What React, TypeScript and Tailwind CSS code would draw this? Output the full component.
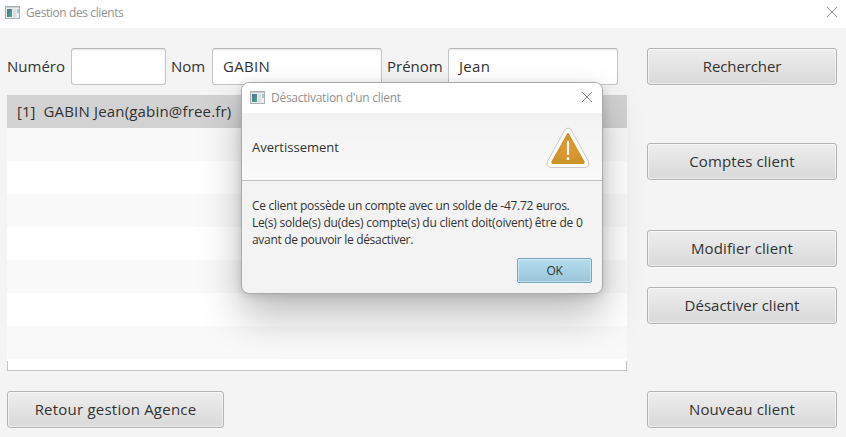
import React from "react";

function WindowIcon() {
  return (
    <svg width="15" height="13" viewBox="0 0 15 13" className="shrink-0">
      <defs>
        <linearGradient id="pane" x1="0" y1="0" x2="1" y2="1">
          <stop offset="0" stopColor="#496f9c" />
          <stop offset="1" stopColor="#55a980" />
        </linearGradient>
      </defs>
      <rect x="0.5" y="0.5" width="14" height="12" fill="#e9edf0" stroke="#a9afb5" />
      <rect x="1" y="1" width="13" height="1" fill="#cbd0d5" />
      <rect x="2" y="3" width="5" height="8" fill="url(#pane)" />
      <rect x="8" y="3" width="3" height="8" fill="#dedede" />
      <rect x="12" y="3" width="2" height="4" fill="#a5cbc5" />
      <rect x="12" y="7" width="2" height="4" fill="#eef2f2" />
    </svg>
  );
}

function CloseIcon() {
  return (
    <svg width="10" height="10" viewBox="0 0 10 10" className="shrink-0">
      <path d="M0 0L10 10M10 0L0 10" stroke="#8a8a8a" strokeWidth="1" fill="none" />
    </svg>
  );
}

function WarningIcon() {
  return (
    <svg width="44" height="42" viewBox="0 0 44 42" className="mt-[2px] shrink-0">
      <defs>
        <radialGradient id="amber">
          <stop offset="0" stopColor="#e39a35" />
          <stop offset="1" stopColor="#cc9329" />
        </radialGradient>
      </defs>
      <path d="M18.6 3.3Q22 -1.2 25.4 3.3L42.4 34.2Q44.3 39.8 39.2 40.5H4.8Q-.3 39.8 1.6 34.2Z" fill="#fff" stroke="#cacaca" />
      <path d="M20.8 7Q22 5 23.2 7L38.5 34.4Q39.2 37 37 37H7Q4.800 37 5.500 34.400Z" fill="url(#amber)" />
      <rect x="20.900" y="14" width="2.200" height="14" rx="0.700" fill="#fff" />
      <rect x="20.700" y="30.200" width="2.600" height="2.800" rx="0.800" fill="#fff" />
    </svg>
  );
}

function Button({ children, className }: { children: React.ReactNode; className: string }) {
  return (
    <button
      className={`flex h-[37px] shrink-0 items-center justify-center rounded-[3px] border border-[#b3b3b3] bg-linear-to-b from-[#eeeeee] to-[#d9d9d9] text-[15px] whitespace-nowrap shadow-[inset_0_0_0_1px_rgba(255,255,255,0.5),0_1px_0_#fafafa] ${className}`}
    >
      {children}
    </button>
  );
}

function Field({ value, className }: { value: string; className: string }) {
  return (
    <div
      className={`flex h-[37px] shrink-0 items-center rounded-[3px] border border-[#c4c4c4] border-t-[#b7b7b7] bg-white pl-[10px] text-[15px] shadow-[inset_0_2px_2px_-1px_#e4e4e4] ${className}`}
    >
      {value}
    </div>
  );
}

function ClientList() {
  return (
    <div className="mt-[10px] h-[276px] w-[620px] bg-white">
      <div className="flex h-[33px] items-center gap-[8px] bg-[#d2d2d2] pl-[10px] text-[15px]">
        <span>[1]</span>
        <span className="tracking-[0.18px]">GABIN Jean(gabin@free.fr)</span>
      </div>
      {[1, 2, 3, 4, 5, 6, 7].map((row) => (
        <div key={row} className={row % 2 ? "h-[33px] bg-[#f9f9f9]" : "h-[33px] bg-white"} />
      ))}
      <div className="h-[2px]" />
      <div className="h-[10px] border-x border-b border-[#c4c4c4]" />
    </div>
  );
}

function WarningDialog() {
  return (
    <div className="absolute top-[82px] left-[241px] flex h-[212px] w-[362px] flex-col rounded-[8px] border border-[#aaaaaa] bg-[#f3f3f3] text-[12px] shadow-[0_22px_40px_rgba(0,0,0,0.26),0_2px_10px_rgba(0,0,0,0.14)]">
      <div className="flex h-[30px] shrink-0 items-center justify-between rounded-t-[7px] bg-white pr-[10px] pl-[8px]">
        <div className="flex items-center gap-[6px] text-[#929292]">
          <span className="-mt-[2px]">
            <WindowIcon />
          </span>
          <span className="tracking-[-0.27px]">Désactivation d'un client</span>
        </div>
        <span className="-mt-[2px]">
          <CloseIcon />
        </span>
      </div>
      <div className="flex h-[68px] shrink-0 items-center justify-between border-b border-[#bebebe] bg-linear-to-b from-[#f2f2f2] to-[#fafafa] pr-[12px] pl-[10px]">
        <span className="pt-[2px] text-[13px]">Avertissement</span>
        <WarningIcon />
      </div>
      <div className="px-[10px] pt-[16px] leading-[17px] whitespace-nowrap">
        <div className="tracking-[-0.27px]">Ce client possède un compte avec un solde de -47.72 euros.</div>
        <div className="tracking-[-0.23px]">Le(s) solde(s) du(des) compte(s) du client doit(oivent) être de 0</div>
        <div className="tracking-[-0.31px]">avant de pouvoir le désactiver.</div>
      </div>
      <div className="mt-[10px] flex justify-end pr-[10px]">
        <button className="h-[25px] w-[75px] rounded-[2px] border border-[#7aa5b9] bg-linear-to-b from-[#b5ddf0] to-[#9bc4d8] tracking-[-0.3px] shadow-[inset_0_0_0_1px_rgba(211,239,250,0.65)]">
          OK
        </button>
      </div>
    </div>
  );
}

export default function App() {
  return (
    <div className="relative h-[437px] w-[846px] overflow-hidden bg-[#f4f4f4] font-['Open_Sans','Noto_Sans',sans-serif] text-[#333333]">
      <header className="flex h-[28px] items-center justify-between bg-white pr-[9px] pb-[3px] pl-[5px]">
        <div className="flex items-center gap-[6px] text-[12px] text-[#929292]">
          <span className="-mt-px">
            <WindowIcon />
          </span>
          <span className="pt-px tracking-[-0.4px]">Gestion des clients</span>
        </div>
        <span className="-mt-[2px]">
          <CloseIcon />
        </span>
      </header>
      <main className="flex pl-[7px]">
        <section className="w-[640px] pt-[20px]">
          <div className="flex items-center text-[15px] whitespace-nowrap">
            <label className="w-[64px]">Numéro</label>
            <Field value="" className="w-[95px]" />
            <label className="w-[46px] pl-[5px]">Nom</label>
            <Field value="GABIN" className="w-[170px] tracking-[0.3px]" />
            <label className="w-[66px] pl-[5px]">Prénom</label>
            <Field value="Jean" className="w-[170px] tracking-[0.3px]" />
          </div>
          <ClientList />
          <Button className="mt-[20px] w-[217px] tracking-[0.22px]">Retour gestion Agence</Button>
        </section>
        <aside className="flex w-[190px] flex-col pt-[20px]">
          <Button className="w-full tracking-[-0.1px]">Rechercher</Button>
          <Button className="mt-[58px] w-full tracking-[0.1px]">Comptes client</Button>
          <Button className="mt-[50px] w-full tracking-[0.1px]">Modifier client</Button>
          <Button className="mt-[20px] w-full">Désactiver client</Button>
          <Button className="mt-[67px] w-full tracking-[0.1px]">Nouveau client</Button>
        </aside>
      </main>
      <WarningDialog />
    </div>
  );
}
